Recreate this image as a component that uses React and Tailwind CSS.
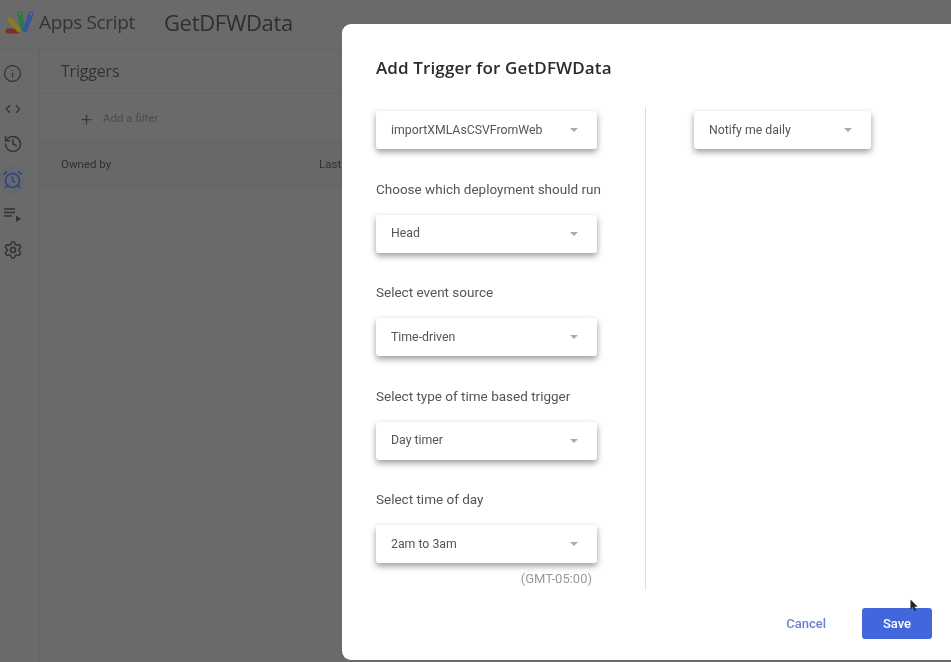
import { Plus, Info, History, AlarmClock, Settings, ChevronLeft, ChevronRight } from 'lucide-react'

function Logo() {
  return (
    <svg width="30" height="24" viewBox="0 0 30 24" fill="none" strokeLinecap="round" strokeWidth="5">
      <path d="M3 21 L13 21" stroke="#7d2c2a" />
      <path d="M5 10 L14 20" stroke="#8a7a22" />
      <path d="M15 4 L18 19" stroke="#2c7a4a" />
      <path d="M26 4 L20 20" stroke="#3a5699" />
      <circle cx="15" cy="4" r="1" fill="#777" />
      <circle cx="26" cy="4" r="1" fill="#777" />
    </svg>
  )
}

function QueueIcon() {
  return (
    <svg width="18" height="16" viewBox="0 0 18 16" fill="none">
      <path d="M0 2h11M0 5.5h11M0 9h8" stroke="#333" strokeWidth="1.4" />
      <path d="M12 8.5l5 3.2-5 3.2z" fill="#333" />
    </svg>
  )
}

function Select({ value, width = 'w-[221px]' }) {
  return (
    <div className={`${width} h-[38px] bg-white rounded-[3px] shadow-[0_3px_6px_rgba(0,0,0,0.4)] flex items-center justify-between pl-[15px] pr-[19px]`}>
      <span className="text-[12.3px] leading-[16px] -mt-[1px] text-[#555]">{value}</span>
      <span className="w-0 h-0 border-x-[4.5px] border-x-transparent border-t-[4.5px] border-t-[#aaa]" />
    </div>
  )
}

function Field({ label, value }) {
  return (
    <div className="flex flex-col">
      <div className="h-[40px] pt-[5px] text-[13.5px] leading-[18px] text-[#555]">{label}</div>
      <Select value={value} />
    </div>
  )
}

const railIcons = [
  <Info key="i" size={19} strokeWidth={1.6} />,
  <span key="c" className="flex"><ChevronLeft size={14} strokeWidth={2} className="-mr-[2px]" /><ChevronRight size={14} strokeWidth={2} className="-ml-[2px]" /></span>,
  <History key="h" size={20} strokeWidth={1.8} />,
  <span key="a" className="w-[30px] h-[30px] rounded-full bg-[#666870] flex items-center justify-center text-[#33457f]"><AlarmClock size={21} strokeWidth={1.9} /></span>,
  <QueueIcon key="q" />,
  <Settings key="s" size={20} strokeWidth={1.8} />,
]

export default function App() {
  return (
    <div className="relative w-[951px] h-[662px] overflow-hidden bg-[#6a6a6a] font-['Roboto',sans-serif] text-[#2d2d2d] blur-[0.5px]">
      <header className="h-[50px] flex items-center pl-[5px] pb-[5px] border-b border-[#646464]">
        <Logo />
        <span className="ml-[4px] text-[19px] text-[#333] font-['Open_Sans',sans-serif] tracking-[-0.35px]">Apps Script</span>
        <span className="ml-[29px] text-[22px] text-[#2e2e2e] font-['Open_Sans',sans-serif] tracking-[-0.3px]">GetDFWData</span>
      </header>

      <div className="flex h-[612px]">
        <nav className="w-[40px] border-r border-[#646464] flex flex-col text-[#333] pt-[6px]">
          {railIcons.map((icon, i) => (
            <div key={i} className="w-[25px] h-[35.3px] flex items-center justify-center">{icon}</div>
          ))}
        </nav>

        <main className="flex-1">
          <div className="h-[44px] border-b border-[#646464] pl-[21px] pb-[2px] flex items-center">
            <h1 className="text-[16px] text-[#333] font-['Open_Sans',sans-serif] tracking-[-0.2px]">Triggers</h1>
          </div>
          <div className="h-[48px] pl-[27px] pt-[2px] flex items-center">
            <div className="h-[28px] w-[105px] rounded-full border border-dashed border-[#646464] flex items-center pl-[11px] gap-[9px] text-[#3a3a3a]">
              <Plus size={15} strokeWidth={2} />
              <span className="text-[11.5px] text-[#4c4c4c]">Add a filter</span>
            </div>
          </div>
          <div className="h-[44px] bg-[#686868] border-y border-[#646464] pl-[21px] pt-[2px] flex items-center text-[11.5px] text-[#303030]">
            <span className="w-[258px]">Owned by</span>
            <span>Last run</span>
          </div>
        </main>
      </div>

      {/* dialog */}
      <div className="absolute left-[342px] top-[24px] w-[640px] h-[636px] bg-white rounded-[9px] flex flex-col pl-[34px] pr-[20px]">
        <h2 className="mt-[33px] h-[22px] text-[17px] leading-[22px] font-semibold text-[#2b2b2b] font-['Open_Sans',sans-serif] tracking-[0.12px]">Add Trigger for GetDFWData</h2>

        <div className="mt-[28px] flex items-stretch">
          <div className="w-[270px] h-[483px] border-r border-[#dddddd] pt-[4px] flex flex-col gap-[25.5px]">
            <Select value="importXMLAsCSVFromWeb" />
            <Field label="Choose which deployment should run" value="Head" />
            <Field label="Select event source" value="Time-driven" />
            <Field label="Select type of time based trigger" value="Day timer" />
            <Field label="Select time of day" value="2am to 3am" />
            <div className="-mt-[18px] w-[216px] text-right text-[13px] leading-[16px] text-[#999]">(GMT-05:00)</div>
          </div>
          <div className="pl-[48px] pt-[4px]">
            <Select value="Notify me daily" width="w-[177px]" />
          </div>
        </div>

        <div className="mt-[18px] w-[556px] flex items-center justify-end">
          <span className="text-[13px] font-medium text-[#6f7fd0] mr-[36px]">Cancel</span>
          <button className="w-[70px] h-[31px] rounded-[3px] bg-[#4267dc] text-white text-[13px] font-medium">Save</button>
        </div>
      </div>

      {/* mouse pointer */}
      <svg className="absolute left-[910px] top-[599px]" width="9" height="13" viewBox="0 0 9 13">
        <path d="M0.5 0.5v10l2.4-2.2 1.6 3.8 1.6-.7-1.6-3.6h3.2z" fill="#222" />
      </svg>
    </div>
  )
}
